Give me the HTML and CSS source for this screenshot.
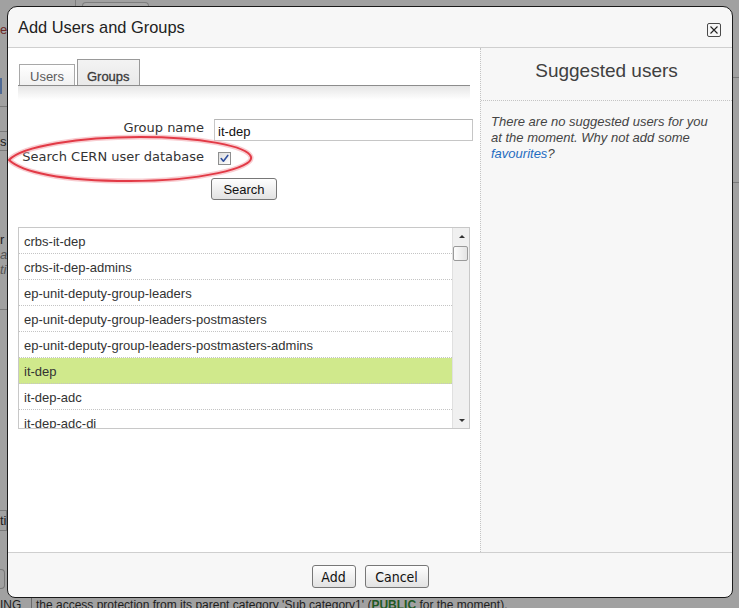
FILE: index.html
```html
<!DOCTYPE html>
<html>
<head>
<meta charset="utf-8">
<title>Add Users and Groups</title>
<link rel="stylesheet" href="styles.css">
</head>
<body>
<div class="page">
  <div class="bg-top"><span class="bt1"></span><span class="bt2"></span></div>
  <div class="bg-mid">
    <div class="bg-left">
      <div class="bl-red">e</div>
      <div class="bl-bar"></div>
      <div class="bl-line l1"></div>
      <div class="bl-line l2"></div>
      <div class="bl-s">s</div>
      <div class="bl-line"></div>
      <div class="bl-r">r</div>
      <div class="bl-it a">a</div>
      <div class="bl-it ti">ti</div>
      <div class="bl-line l3"></div>
      <div class="bl-box">ti</div>
      <div class="bl-btn"></div>
    </div>
    <div class="bg-right">
      <div class="br-line r1"></div>
      <div class="br-line r2"></div>
    </div>
  </div>
  <div class="bg-foot">
    <span class="ing">ING</span>
    <span class="foot-text">the access protection from its parent category 'Sub category1' (<b>PUBLIC</b> for the moment).</span>
  </div>

  <div class="dialog">
    <div class="dlg-head">
      <span class="dlg-title">Add Users and Groups</span>
      <span class="close"><svg width="12" height="12" viewBox="0 0 12 12"><path d="M2.5 2.5 L9.5 9.5 M9.5 2.5 L2.5 9.5" stroke="#222" stroke-width="1.1" fill="none"/></svg></span>
    </div>
    <div class="dlg-body">
      <div class="left">
        <div class="tabs">
          <span class="tab users">Users</span>
          <span class="tab groups">Groups</span>
        </div>
        <div class="shade"></div>
        <div class="form">
          <label class="lbl">Group name</label>
          <input class="inp" type="text" value="it-dep">
          <label class="lbl">Search CERN user database</label>
          <span class="chk"><svg width="11" height="11" viewBox="0 0 11 11"><path d="M2.2 5.6 L4.4 8.2 L8.8 2.4" stroke="#2f4f9e" stroke-width="1.6" fill="none" stroke-linecap="round" stroke-linejoin="round"/></svg></span>
        </div>
        <div class="btn-row"><button class="btn search">Search</button></div>
        <div class="list">
          <div class="rows">
            <div class="row">crbs-it-dep</div>
            <div class="row">crbs-it-dep-admins</div>
            <div class="row">ep-unit-deputy-group-leaders</div>
            <div class="row">ep-unit-deputy-group-leaders-postmasters</div>
            <div class="row">ep-unit-deputy-group-leaders-postmasters-admins</div>
            <div class="row sel">it-dep</div>
            <div class="row">it-dep-adc</div>
            <div class="row">it-dep-adc-di</div>
          </div>
          <div class="scroll">
            <span class="arr up"></span>
            <span class="thumb"></span>
            <span class="arr down"></span>
          </div>
        </div>
      </div>
      <div class="right">
        <div class="suggest-head">Suggested users</div>
        <div class="suggest-text">There are no suggested users for you at the moment. Why not add some <a class="fav">favourites</a>?</div>
      </div>
    </div>
    <div class="dlg-foot">
      <button class="btn fbtn add">Add</button>
      <button class="btn fbtn cancel">Cancel</button>
    </div>
    <svg class="mark" width="250" height="55" viewBox="7 132 250 55">
      <path d="M9 160 C22 146 80 137 140 137 C200 137 248 146 251 157 C254 168 200 181 130 181 C60 181 22 172 9 160 Z" fill="none" stroke="#f3a3aa" stroke-width="5" opacity="0.55"/>
      <path d="M9 160 C22 146 80 137 140 137 C200 137 248 146 251 157 C254 168 200 181 130 181 C60 181 22 172 9 160 Z" fill="none" stroke="#e23a46" stroke-width="2"/>
    </svg>
  </div>
</div>
</body>
</html>
```

FILE: styles.css
```css
html, body {
  margin: 0;
  padding: 0;
}
body {
  background: #a1a1a1;
  font-family: "Liberation Sans", Arial, sans-serif;
}
.page {
  position: relative;
  width: 739px;
  height: 608px;
  overflow: hidden;
  display: grid;
  grid-template-rows: 6px 1fr 10px;
}

/* background page (dimmed) */
.bg-top {
  display: flex;
  height: 6px;
}
.bt1 {
  width: 75px;
  border-right: 1px solid #7e7e7e;
}
.bt2 {
  margin-left: 6px;
  margin-top: 2px;
  width: 65px;
  border: 1px solid #7e7e7e;
  border-bottom: 0;
  border-radius: 4px 4px 0 0;
  background: #a7a7a7;
}
.bg-mid {
  display: flex;
  justify-content: space-between;
}
.bg-left {
  width: 7px;
  font-size: 13px;
  line-height: 14px;
  color: #1e1e1e;
  overflow: hidden;
}
.bl-red {
  margin-top: 17px;
  height: 14px;
  color: #6b2626;
}
.bl-bar {
  margin-top: 41px;
  width: 2px;
  height: 16px;
  background: #4f6a95;
}
.bl-line {
  height: 1px;
  background: #7a7a7a;
}
.l1 { margin-top: 12px; }
.l2 { margin-top: 24px; }
.bl-s {
  margin-top: 3px;
  height: 15px;
}
.bl-r {
  margin-top: 82px;
}
.bl-it {
  font-style: italic;
  color: #555;
}
.bl-it.a { margin-top: 1px; }
.bl-it.ti { margin-top: 1px; }
.l3 { margin-top: 32px; }
.bl-box {
  margin-top: 200px;
  height: 19px;
  line-height: 19px;
  border: 1px solid #7a7a7a;
  border-left: 0;
}
.bl-btn {
  margin-top: 38px;
  width: 4px;
  height: 18px;
  border: 1px solid #777;
  border-left: 0;
  border-radius: 0 4px 4px 0;
}
.bg-right {
  width: 6px;
}
.br-line {
  height: 1px;
  background: #7a7a7a;
}
.r1 { margin-top: 71px; }
.r2 { margin-top: 104px; }
.bg-foot {
  display: flex;
  font-size: 12px;
  line-height: 14px;
  color: #1e1e1e;
  white-space: nowrap;
}
.ing {
  width: 31px;
  border-right: 1px solid #6a6a6a;
}
.foot-text {
  padding-left: 4px;
}
.foot-text b {
  color: #1f5a24;
}

/* dialog */
.dialog {
  position: absolute;
  left: 7px;
  top: 6px;
  width: 726px;
  height: 592px;
  box-sizing: border-box;
  border: 1px solid #1a1a1a;
  border-radius: 10px 10px 8px 8px;
  background: #f7f7f7;
  display: flex;
  flex-direction: column;
  overflow: hidden;
}
.dlg-head {
  height: 40px;
  flex: none;
  border-bottom: 1px solid #cfcfcf;
  display: flex;
  align-items: center;
  justify-content: space-between;
  padding: 0 11px 0 10px;
}
.dlg-title {
  font-size: 16.4px;
  color: #222;
}
.close {
  width: 14px;
  height: 14px;
  box-sizing: border-box;
  border: 1px solid #4a4a4a;
  border-radius: 2px;
  margin-top: 6px;
  display: flex;
  align-items: center;
  justify-content: center;
}
.close svg { display: block; }

.dlg-body {
  display: flex;
  height: 504px;
  flex: none;
}
.left {
  width: 472px;
  box-sizing: border-box;
  background: #fff;
  padding: 11px 10px 0;
}
.tabs {
  display: flex;
  align-items: flex-end;
  gap: 2px;
  padding-left: 1px;
  border-bottom: 1px solid #8c8c8c;
}
.tab {
  border: 1px solid #a8a8a8;
  border-bottom: 0;
  font-size: 13px;
  line-height: 15px;
  padding: 4px 10px 1px 10px;
}
.tab.users {
  color: #5c5c5c;
  background: linear-gradient(#ffffff, #f1f1f1);
}
.tab.groups {
  padding: 9px 9px 1px 9px;
  color: #3a3a3a;
  -webkit-text-stroke: 0.3px #3a3a3a;
  background: linear-gradient(#f3f3f3, #e9e9e9);
  border-color: #999;
}
.shade {
  height: 14px;
  background: linear-gradient(#e6e6e6, #ffffff);
}
.form {
  margin-top: 19px;
  display: grid;
  grid-template-columns: 186px 259px;
  column-gap: 10px;
  row-gap: 7px;
  align-items: start;
}
.lbl {
  text-align: right;
  font-family: "DejaVu Sans", Verdana, sans-serif;
  font-size: 13px;
  line-height: 16px;
  padding-top: 1px;
  color: #333;
  white-space: nowrap;
}
.inp {
  width: 259px;
  height: 22px;
  box-sizing: border-box;
  border: 1px solid #c6c6c6;
  border-top-color: #b5b5b5;
  padding: 3px 3px 0;
  margin: 0;
  font-family: "Liberation Sans", Arial, sans-serif;
  font-size: 13px;
  color: #111;
  outline: none;
}
.chk {
  width: 13px;
  height: 13px;
  box-sizing: border-box;
  margin: 4px 0 0 4px;
  border: 1px solid #8e8f8f;
  background: linear-gradient(135deg, #dcdcdc, #ffffff);
  display: flex;
  align-items: center;
  justify-content: center;
}
.chk svg { display: block; }
.btn-row {
  margin-top: 13px;
  text-align: center;
  height: 22px;
}
.btn {
  font-family: "Liberation Sans", Arial, sans-serif;
  color: #111;
  border: 1px solid #777;
  border-radius: 3px;
  background: linear-gradient(#fefefe, #e2e2e2);
  margin: 0;
}
.search {
  height: 22px;
  font-size: 13px;
  padding: 0 11px;
  vertical-align: top;
}
.list {
  margin-top: 27px;
  width: 452px;
  height: 202px;
  box-sizing: border-box;
  border: 1px solid #c8c8c8;
  display: flex;
}
.rows {
  flex: 1;
  overflow: hidden;
}
.row {
  height: 21px;
  line-height: 21px;
  padding: 3px 0 1px 5px;
  border-bottom: 1px dotted #c4c4c4;
  font-size: 13px;
  color: #333;
  white-space: nowrap;
}
.row.sel {
  background: #d0e98c;
}
.scroll {
  width: 16px;
  border-left: 1px solid #e0e0e0;
  background: #f0f0f0;
  display: flex;
  flex-direction: column;
}
.arr {
  width: 0;
  height: 0;
  margin-left: 6px;
  border-left: 3px solid transparent;
  border-right: 3px solid transparent;
}
.arr.up {
  margin-top: 7px;
  border-bottom: 3px solid #333;
}
.arr.down {
  margin-top: auto;
  margin-bottom: 6px;
  border-top: 3px solid #333;
}
.thumb {
  margin-top: 8px;
  width: 15px;
  height: 15px;
  box-sizing: border-box;
  border: 1px solid #9a9a9a;
  border-radius: 2px;
  background: linear-gradient(90deg, #fdfdfd, #e3e3e3);
}
.right {
  flex: 1;
  border-left: 1px dotted #c4c4c4;
}
.suggest-head {
  height: 53px;
  box-sizing: border-box;
  padding-top: 11px;
  border-bottom: 1px dotted #c4c4c4;
  text-align: center;
  font-size: 19px;
  line-height: 24px;
  color: #404040;
}
.suggest-text {
  padding: 13px 10px 0;
  font-style: italic;
  font-size: 13px;
  line-height: 16px;
  color: #444;
}
.fav {
  color: #1f6cc0;
}
.dlg-foot {
  flex: 1;
  border-top: 1px solid #cfcfcf;
  display: flex;
  justify-content: center;
  align-items: flex-start;
  gap: 9px;
  padding-top: 12px;
}
.fbtn {
  height: 23px;
  font-family: "Liberation Sans Narrow", "DejaVu Sans Condensed", "Liberation Sans", sans-serif;
  font-size: 14px;
  padding: 0;
}
.add { width: 44px; }
.cancel { width: 64px; }
.mark {
  position: absolute;
  left: -1px;
  top: 125px;
}
```
